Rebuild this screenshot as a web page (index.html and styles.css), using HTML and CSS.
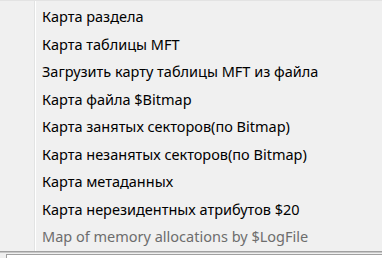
FILE: index.html
```html
<!DOCTYPE html>
<html lang="ru">
<head>
<meta charset="utf-8">
<link rel="stylesheet" href="styles.css">
</head>
<body>
<div class="menu">
  <div class="gutter"></div>
  <ul class="items">
    <li class="item">Карта раздела</li>
    <li class="item">Карта таблицы MFT</li>
    <li class="item">Загрузить карту таблицы MFT из файла</li>
    <li class="item">Карта файла $Bitmap</li>
    <li class="item">Карта занятых секторов(по Bitmap)</li>
    <li class="item">Карта незанятых секторов(по Bitmap)</li>
    <li class="item">Карта метаданных</li>
    <li class="item">Карта нерезидентных атрибутов $20</li>
    <li class="item disabled">Map of memory allocations by $LogFile</li>
  </ul>
</div>
<div class="below">
  <div class="field"></div>
</div>
</body>
</html>
```
FILE: styles.css
```css
html, body {
  margin: 0;
  padding: 0;
  background: #f0f0f0;
  width: 382px;
  height: 258px;
  overflow: hidden;
}
.menu {
  display: flex;
  height: 250px;
  border-top: 1px solid #e3e3e3;
  background: #f0f0f0;
  font-family: "Noto Sans", "Open Sans", sans-serif;
  font-size: 14.5px;
  color: #000;
}
.gutter {
  width: 34px;
  flex: none;
  border-right: 1px solid #e2e3e3;
  box-shadow: 1px 0 0 #ffffff;
}
.items {
  list-style: none;
  margin: 0;
  padding: 2px 0 0 7px;
  flex: 1;
}
.item {
  height: 27.5px;
  line-height: 27.5px;
  white-space: nowrap;
}
.disabled {
  color: #6d6d6d;
}
.below {
  height: 7px;
  border-top: 1px solid #a0a0a0;
  box-shadow: inset 0 1px 0 #c8c8c8;
  background: #f0f0f0;
  padding: 2px 0 0 6px;
  box-sizing: border-box;
}
.field {
  height: 100%;
  background: #ffffff;
  border-left: 1px solid #a0a0a0;
  border-top: 1px solid #a0a0a0;
}
```
